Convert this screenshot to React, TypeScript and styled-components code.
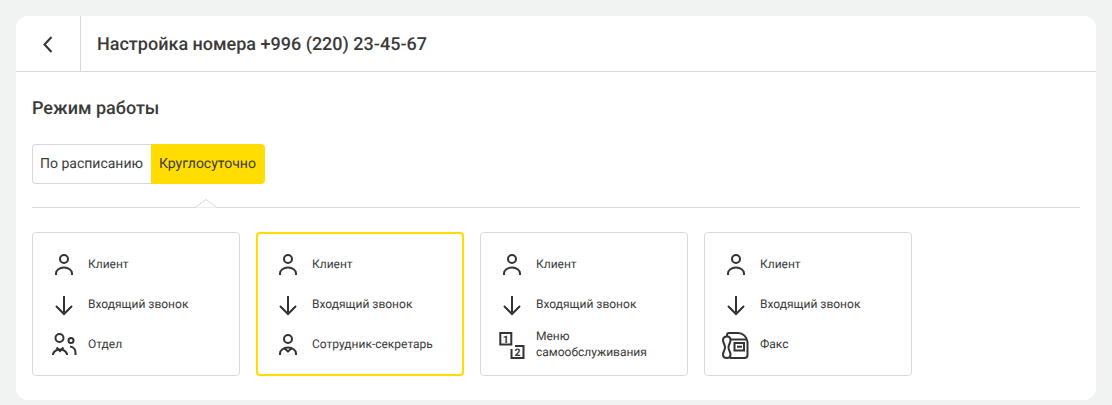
import React from "react";
import styled, { createGlobalStyle } from "styled-components";

const GlobalStyle = createGlobalStyle`
  html, body {
    margin: 0;
    padding: 0;
    background: #f1f3f2;
    font-family: Roboto, "Liberation Sans", sans-serif;
    color: #3a3a3a;
    text-rendering: geometricPrecision;
  }
`;

const Icon = styled.svg.attrs({
  width: 24,
  height: 24,
  viewBox: "0 0 24 24",
  fill: "none",
  stroke: "#333",
  strokeWidth: 2,
})`
  display: block;
  flex: none;
`;

const DepartmentSvg = styled(Icon).attrs({ width: 28, height: 24, viewBox: "0 0 28 24" })`
  margin-left: -2px;
  margin-right: -2px;
`;

const MenuSvg = styled(Icon).attrs({ width: 26, height: 27, viewBox: "0 0 26 27" })`
  margin-left: -1px;
  margin-right: -1px;
`;

const FaxSvg = styled(Icon).attrs({ width: 27, height: 27, viewBox: "0 0 27 27" })`
  margin-left: -2px;
  margin-right: -1px;
`;

const Digit = styled.text`
  font-family: Roboto, sans-serif;
  font-size: 10.5px;
  font-weight: 700;
  fill: #333;
  stroke: none;
  text-anchor: middle;
`;

const PersonIcon = () => (
  <Icon>
    <circle cx="12" cy="6" r="4" />
    <path d="M4 22v-1.500a8 6 0 0 1 16 0V22" />
  </Icon>
);

const ArrowIcon = () => (
  <Icon>
    <path d="M12 3v18M4 13l8 8 8-8" />
  </Icon>
);

const SecretaryIcon = () => (
  <Icon>
    <circle cx="12" cy="6" r="4" />
    <path d="M4 22v-1.500a8 6 0 0 1 16 0V22" />
    <path d="M8 15l4 3.500 4-3.500" />
  </Icon>
);

const DepartmentIcon = () => (
  <DepartmentSvg>
    <circle cx="9.500" cy="5" r="4" />
    <circle cx="21" cy="7.500" r="2.500" />
    <path d="M3 22v-1a7.500 7 0 0 1 14 0v1" />
    <path d="M6.500 14.500l3.500 3.500 3.500-3.500" />
    <path d="M20 13.500a6 6 0 0 1 5.500 6V22" />
  </DepartmentSvg>
);

const MenuIcon = () => (
  <MenuSvg>
    <rect x="1.300" y="1" width="11" height="11.500" />
    <path d="M16 14h8.500v12h-12v-9" />
    <Digit x="6.800" y="10.500">1</Digit>
    <Digit x="18.500" y="24">2</Digit>
  </MenuSvg>
);

const FaxIcon = () => (
  <FaxSvg>
    <path d="M5 4.500c-2.500 0-4 1.500-4 3.500 0 3 2 4.500 2 7.500s-2 4-2 7c0 2 1.500 3.500 4 3.500s3.500-1.500 3.500-3.500c0-3-2-4-2-7s2-4.500 2-7.500c0-2-1-3.500-3.500-3.500z" />
    <path d="M5 4.500V3c0-1 1-2 2-2h9c5 0 9 4 9.500 9v13a3 3 0 0 1-3 3H8" />
    <path d="M8 7.500h17" />
    <rect x="12.500" y="11" width="9.500" height="7.500" />
    <path d="M15 14.700h5" />
  </FaxSvg>
);

const Card = styled.main`
  margin: 16px 16px 0;
  height: 384px;
  box-sizing: border-box;
  background: #fff;
  border-radius: 12px;
`;

const Header = styled.header`
  display: flex;
  align-items: stretch;
  height: 56px;
  box-sizing: border-box;
  border-bottom: 1px solid #d9d9d9;
`;

const BackButton = styled.button`
  width: 65px;
  flex: none;
  display: flex;
  align-items: center;
  justify-content: center;
  padding: 0;
  background: none;
  border: 0;
  border-right: 1px solid #d9d9d9;
`;

const Title = styled.h1`
  margin: 2px 0 0 16px;
  align-self: center;
  font-size: 18px;
  line-height: 24px;
  font-weight: 500;
`;

const Body = styled.section`
  padding: 25px 16px 0;
`;

const SectionTitle = styled.h2`
  margin: 0;
  font-size: 18px;
  line-height: 24px;
  font-weight: 500;
`;

const Toggle = styled.div`
  display: inline-flex;
  margin-top: 23px;
  height: 40px;
  vertical-align: top;
`;

const ToggleOption = styled.div<{ $active?: boolean }>`
  display: flex;
  align-items: center;
  font-size: 14px;
  box-sizing: border-box;
  ${(p) =>
    p.$active
      ? `background: #ffdd00; border-radius: 0 4px 4px 0; padding: 0 9px 0 8px;`
      : `background: #fff; border: 1px solid #d9d9d9; border-right: 0; border-radius: 4px 0 0 4px; padding: 0 8px 0 7px;`}
`;

const Divider = styled.div`
  position: relative;
  margin-top: 23px;
  border-top: 1px solid #d9d9d9;
`;

const Notch = styled.svg.attrs({
  width: 26,
  height: 9,
  viewBox: "0 0 26 9",
  fill: "#fff",
  stroke: "#d9d9d9",
})`
  position: absolute;
  left: 161px;
  top: -9px;
`;

const Scenarios = styled.div`
  display: flex;
  gap: 16px;
  margin-top: 24px;
`;

const Scenario = styled.article<{ $selected?: boolean }>`
  width: 208px;
  height: 144px;
  box-sizing: border-box;
  display: flex;
  flex-direction: column;
  gap: 16px;
  border-radius: 4px;
  border: ${(p) => (p.$selected ? "2px solid #ffdd00" : "1px solid #d9d9d9")};
  padding: ${(p) => (p.$selected ? "19px 18px 0" : "20px 19px 0")};
`;

const Row = styled.div`
  display: flex;
  align-items: center;
  gap: 12px;
  height: 24px;
  font-size: 12px;
  line-height: 16px;
`;

const RowLabel = styled.span`
  margin-bottom: 2px;
`;

const scenarios = [
  { icon: <DepartmentIcon />, label: "Отдел" },
  { icon: <SecretaryIcon />, label: "Сотрудник-секретарь", selected: true },
  {
    icon: <MenuIcon />,
    label: (
      <>
        Меню
        <br />
        самообслуживания
      </>
    ),
  },
  { icon: <FaxIcon />, label: "Факс" },
];

export default function App() {
  return (
    <>
      <GlobalStyle />
      <Card>
        <Header>
          <BackButton aria-label="Назад">
            <svg width="24" height="24" viewBox="0 0 24 24" fill="none" stroke="#333" strokeWidth="2">
              <path d="M15.500 5l-7 7.500 7 7.500" />
            </svg>
          </BackButton>
          <Title>Настройка номера +996 (220) 23-45-67</Title>
        </Header>
        <Body>
          <SectionTitle>Режим работы</SectionTitle>
          <Toggle>
            <ToggleOption>По расписанию</ToggleOption>
            <ToggleOption $active>Круглосуточно</ToggleOption>
          </Toggle>
          <Divider>
            <Notch>
              <path d="M0 8.500h2l11-8 11 8h2" />
            </Notch>
          </Divider>
          <Scenarios>
            {scenarios.map((s, i) => (
              <Scenario key={i} $selected={s.selected}>
                <Row>
                  <PersonIcon />
                  <RowLabel>Клиент</RowLabel>
                </Row>
                <Row>
                  <ArrowIcon />
                  <RowLabel>Входящий звонок</RowLabel>
                </Row>
                <Row>
                  {s.icon}
                  <RowLabel>{s.label}</RowLabel>
                </Row>
              </Scenario>
            ))}
          </Scenarios>
        </Body>
      </Card>
    </>
  );
}
